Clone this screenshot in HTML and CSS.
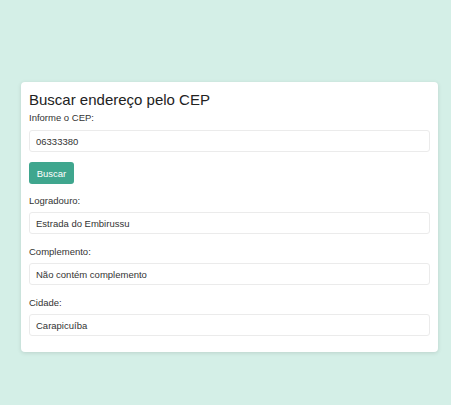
FILE: index.html
```html
<!DOCTYPE html>
<html lang="pt-BR">
<head>
<meta charset="utf-8">
<title>Buscar endereço pelo CEP</title>
<link rel="stylesheet" href="styles.css">
</head>
<body>
<div class="card">
  <h1 class="title">Buscar endereço pelo CEP</h1>
  <label class="label first" for="cep">Informe o CEP:</label>
  <input class="field" id="cep" type="text" value="06333380">
  <button class="btn" type="button">Buscar</button>
  <div class="group">
    <label class="label" for="log">Logradouro:</label>
    <input class="field" id="log" type="text" value="Estrada do Embirussu">
  </div>
  <div class="group">
    <label class="label" for="comp">Complemento:</label>
    <input class="field" id="comp" type="text" value="Não contém complemento">
  </div>
  <div class="group">
    <label class="label" for="cid">Cidade:</label>
    <input class="field" id="cid" type="text" value="Carapicuíba">
  </div>
</div>
</body>
</html>
```
FILE: styles.css
```css
html, body {
  margin: 0;
  padding: 0;
}
body {
  background: #d4efe7;
  font-family: "Liberation Sans", Arial, sans-serif;
  color: #333;
  height: 405px;
  overflow: hidden;
}
.card {
  margin: 82px 0 0 21px;
  width: 417px;
  box-sizing: border-box;
  background: #fff;
  border-radius: 4px;
  box-shadow: 0 1px 4px rgba(0, 0, 0, 0.12);
  padding: 8px 8px 16px;
  display: flex;
  flex-direction: column;
  align-items: flex-start;
}
.title {
  margin: 0;
  font-size: 15px;
  line-height: 19px;
  font-weight: normal;
  color: #222;
}
.label {
  display: block;
  font-size: 9.5px;
  line-height: 12px;
  margin: 0 0 5px;
  color: #333;
}
.label.first {
  margin-top: 3px;
  margin-bottom: 6px;
}
.group {
  align-self: stretch;
  margin-top: 11px;
}
.group + .group {
  margin-top: 12px;
}
.field {
  display: block;
  box-sizing: border-box;
  width: 100%;
  height: 22px;
  margin: 0;
  padding: 0 6px;
  border: 1px solid #ebebeb;
  border-radius: 3px;
  font-family: "Liberation Sans", Arial, sans-serif;
  font-size: 9.5px;
  color: #333;
  background: #fff;
  outline: none;
}
.btn {
  margin-top: 10px;
  height: 22px;
  width: 45px;
  padding: 0;
  border: none;
  border-radius: 3px;
  background: #3fa68e;
  color: #fff;
  font-family: "Liberation Sans", Arial, sans-serif;
  font-size: 9.5px;
  cursor: pointer;
}
```
